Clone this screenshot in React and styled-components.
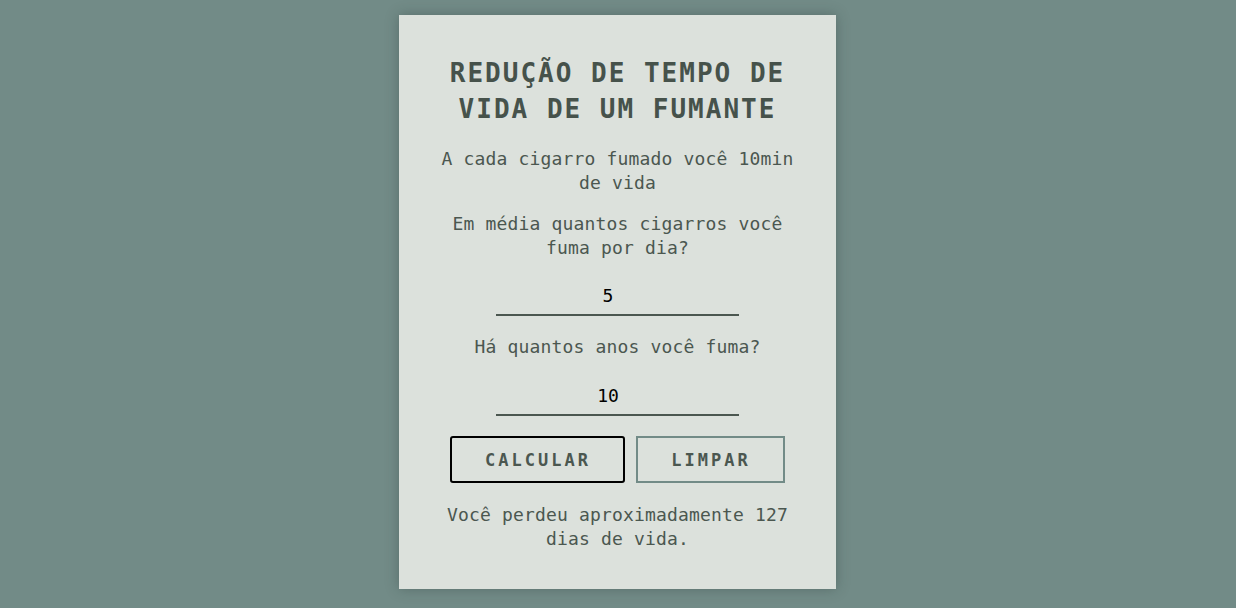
import styled, { createGlobalStyle } from "styled-components";

const GlobalStyle = createGlobalStyle`
  html, body {
    margin: 0;
    padding: 0;
    background: #728b87;
    font-family: "DejaVu Sans Mono", "Liberation Mono", monospace;
  }
`;

const Page = styled.div`
  min-height: 608px;
  display: flex;
  justify-content: center;
  align-items: flex-start;
  padding: 15px 1px 0 0;
  box-sizing: border-box;
`;

const Card = styled.main`
  width: 437px;
  box-sizing: border-box;
  padding: 40px 40px 38px;
  background: #dce1dc;
  box-shadow: 0 0 12px rgba(40, 55, 52, 0.35);
  display: flex;
  flex-direction: column;
  align-items: center;
  text-align: center;
  color: #4b5750;
`;

const Title = styled.h1`
  margin: 0;
  font-size: 26px;
  line-height: 36px;
  font-weight: 700;
  letter-spacing: 2px;
  color: #46524b;
`;

const Text = styled.p`
  margin: ${(p) => p.$top || 18}px 0 0;
  font-size: 18px;
  line-height: 24px;
  letter-spacing: 0.16px;
`;

const Input = styled.input`
  margin-top: ${(p) => p.$top || 17}px;
  width: 243px;
  height: 40px;
  box-sizing: border-box;
  border: none;
  border-bottom: 2px solid #4b5750;
  background: transparent;
  text-align: center;
  font-family: inherit;
  font-size: 18px;
  color: #000;
  outline: none;
  padding: 0 19px 0 0;
`;

const Buttons = styled.div`
  margin-top: 20px;
  display: flex;
  gap: 11px;
`;

const Button = styled.button`
  height: 47px;
  width: ${(p) => p.$width}px;
  box-sizing: border-box;
  background: transparent;
  border: 2px solid ${(p) => (p.$primary ? "#000" : "#728b87")};
  border-radius: ${(p) => (p.$primary ? "3px" : "0")};
  font-family: inherit;
  font-size: 17px;
  font-weight: 700;
  letter-spacing: 3px;
  color: #4b5750;
  padding: 0 0 0 1px;
  cursor: pointer;
`;

export default function App() {
  return (
    <>
      <GlobalStyle />
      <Page>
        <Card>
          <Title>REDUÇÃO DE TEMPO DE VIDA DE UM FUMANTE</Title>
          <Text $top={20}>A cada cigarro fumado você 10min de vida</Text>
          <Text $top={17}>Em média quantos cigarros você fuma por dia?</Text>
          <Input type="text" defaultValue="5" $top={16} />
          <Text $top={19}>Há quantos anos você fuma?</Text>
          <Input type="text" defaultValue="10" $top={17} />
          <Buttons>
            <Button $primary $width={175}>CALCULAR</Button>
            <Button $width={149}>LIMPAR</Button>
          </Buttons>
          <Text $top={20}>Você perdeu aproximadamente 127 dias de vida.</Text>
        </Card>
      </Page>
    </>
  );
}
